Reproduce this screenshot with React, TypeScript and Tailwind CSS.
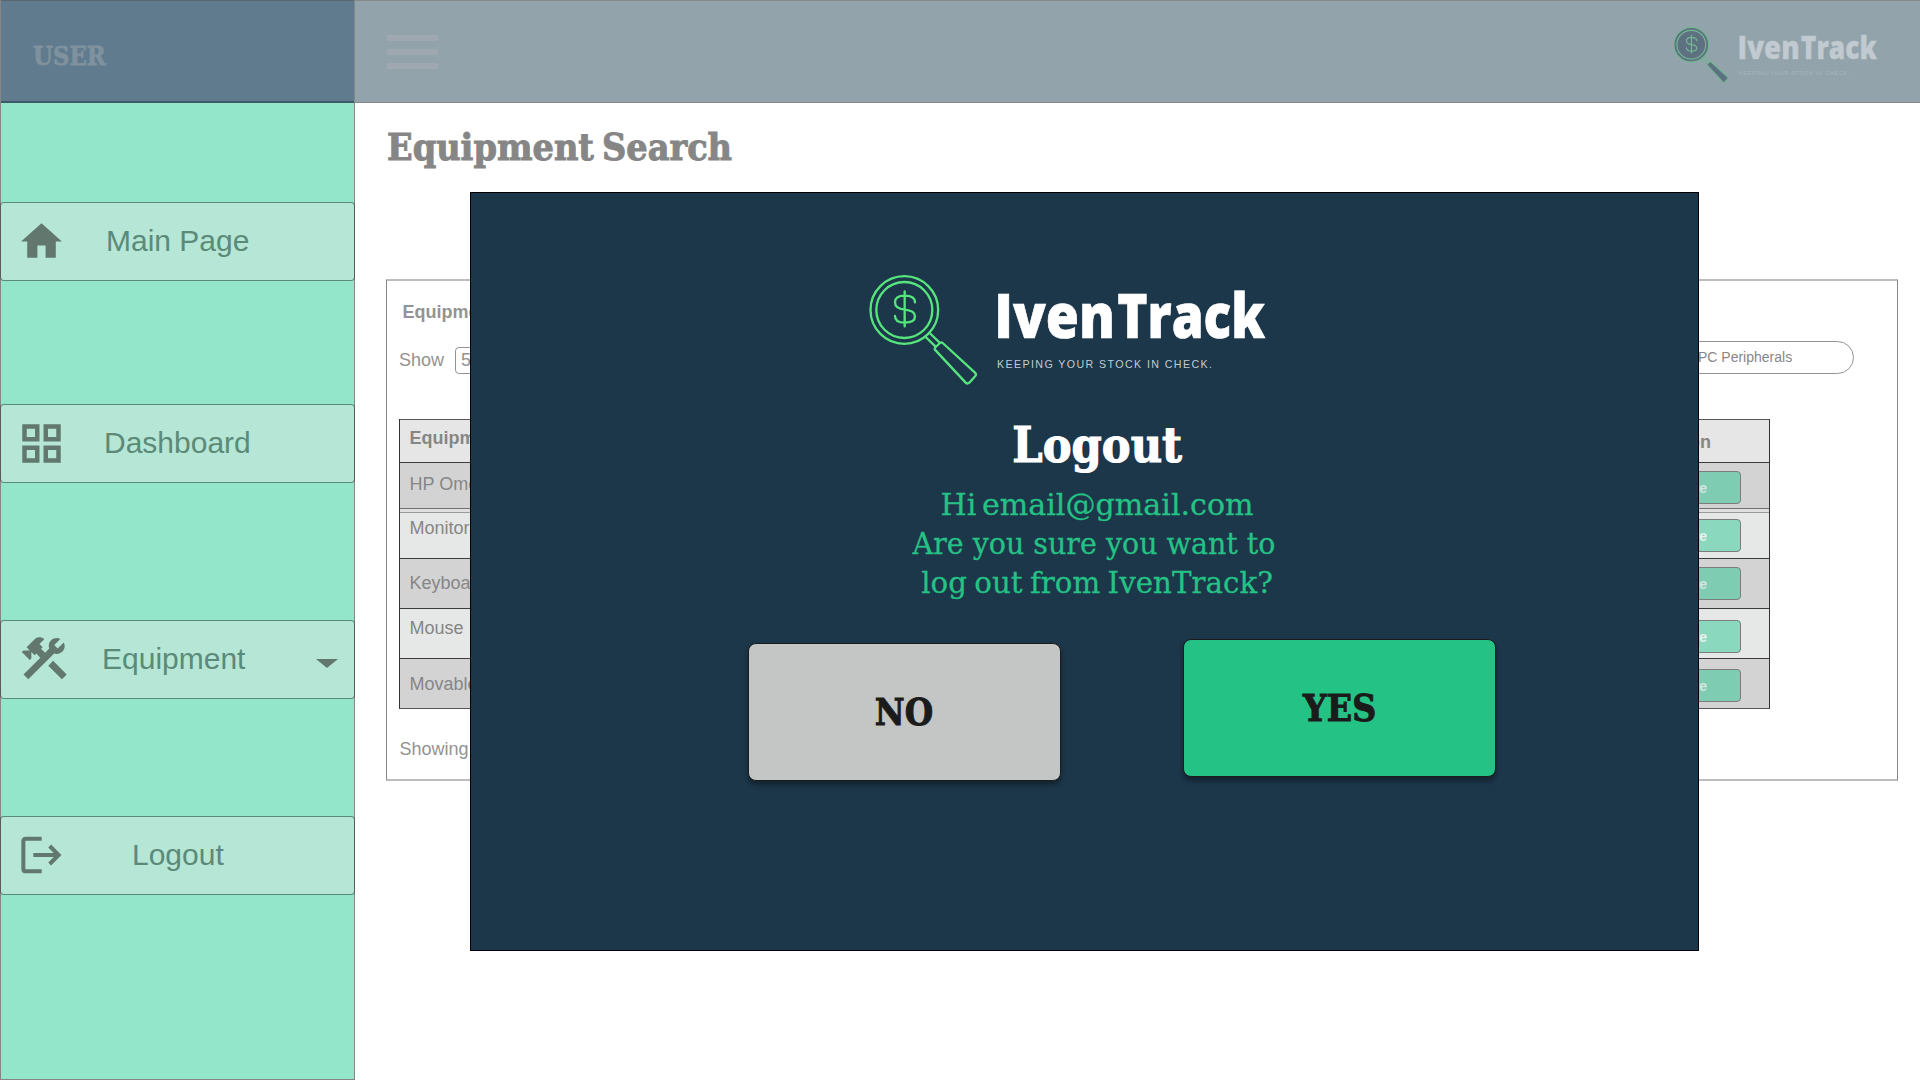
import type { ReactNode } from "react";

const icon = "#62786f";

function HomeIcon() {
  return (
    <svg viewBox="0 0 24 24" className="mt-[14px] ml-[16px] h-[49px] w-[49px]" fill={icon}>
      <path d="M10 20v-6h4v6h5v-8h3L12 3 2 12h3v8z" />
    </svg>
  );
}

function GridIcon() {
  return (
    <svg viewBox="0 0 24 24" className="mt-[13px] ml-[15px] h-[51px] w-[51px]" fill="none" stroke={icon} strokeWidth="2.1">
      <path d="M4 4h6v6H4zM14 4h6v6h-6zM4 14h6v6H4zM14 14h6v6h-6z" />
    </svg>
  );
}

function ToolsIcon() {
  return (
    <svg viewBox="0 0 24 24" className="mt-[10px] ml-[16px] h-[54.5px] w-[54.5px]" fill={icon}>
      <path d="M13.78 15.3L19.78 21.3L21.89 19.14L15.89 13.14L13.78 15.3M17.5 10.1C17.11 10.1 16.69 10.05 16.36 9.91L4.97 21.25L2.86 19.14L10.27 11.74L8.5 9.96L7.78 10.66L6.33 9.25V12.11L5.63 12.81L2.11 9.25L2.81 8.55H5.62L4.22 7.14L7.78 3.58C8.95 2.41 10.83 2.41 12 3.58L9.89 5.74L11.3 7.14L10.59 7.85L12.38 9.63L14.2 7.75C14.06 7.42 14 7 14 6.63C14 4.66 15.56 3.11 17.5 3.11C18.09 3.11 18.61 3.25 19.08 3.53L16.41 6.2L17.91 7.7L20.58 5.03C20.86 5.5 21 6 21 6.63C21 8.55 19.45 10.1 17.5 10.1Z" />
    </svg>
  );
}

function ExitIcon() {
  return (
    <svg viewBox="0 0 126 114" className="mt-[19px] ml-[19px] h-[38px] w-[42px]" fill="none" stroke={icon} strokeWidth="12">
      <path d="M65 8H18q-8 0-8 8v82q0 8 8 8h47M40 57h78M89 30l27 27-27 27" />
    </svg>
  );
}

function Logo({ muted = false }: { muted?: boolean }) {
  const line = muted ? "#74b594" : "#56e57c";
  const fill = muted ? "#5d7180" : "none";
  const text = muted ? "#c0cad0" : "#ffffff";
  return (
    <svg viewBox="0 0 1320 420" className="block h-full w-full" fontFamily="'Open Sans', sans-serif">
      <g fill={fill} stroke={line} strokeWidth="7" strokeLinejoin="round" strokeLinecap="round">
        <circle cx="163" cy="150" r="101.5" />
        <circle cx="163" cy="150" r="84" />
        <path fill="none" d="M164 94v105M195 127q0-20-31-20-29 0-29 20 0 19 29 22 31 3 31 20 0 19-31 19-29 0-29-20" />
        <path fill="none" d="M227 231l29 28M239 219l29 28" />
        <path d="M254 268q0-4 3-7l13-12q4-3 8 0l97 89q5 5 1 10l-18 20q-6 5-11 0z" />
      </g>
      <g fill={text} fontWeight="800" fontSize="184" stroke={text} strokeWidth="2">
        <text x="433" y="234" textLength="362" lengthAdjust="spacingAndGlyphs">Iven</text>
        <text x="802" y="234" textLength="443" lengthAdjust="spacingAndGlyphs">Track</text>
      </g>
      <text x="441" y="324" fontSize="32" fontFamily="'Liberation Sans', sans-serif" textLength="645" fill={muted ? "#a9b6bd" : "#c3cbd1"}>
        KEEPING YOUR STOCK IN CHECK.
      </text>
    </svg>
  );
}

function NavItem({ glyph, label, labelClass, arrow }: { glyph: ReactNode; label: string; labelClass: string; arrow?: boolean }) {
  return (
    <button className="-ml-px flex h-[79px] w-[355px] items-start rounded-[4px] border border-x-[#5a5a5a] border-y-[#5c8a79] bg-[#b5e6d6] text-left">
      <span className="block w-[91px] shrink-0">{glyph}</span>
      <span className={"mt-[20px] flex-1 text-[30px] leading-9 text-[#5c8a79] " + labelClass}>{label}</span>
      {arrow && (
        <svg viewBox="0 0 22 9" className="mt-[38px] mr-[16px] h-[9px] w-[22px]" fill={icon}>
          <path d="M0 0h22L11 9z" />
        </svg>
      )}
    </button>
  );
}

const rows = [
  { name: "HP Omen", row: "h-[46px] border-[#3c3c3c] bg-[#d3d3d3]", text: "mt-[12px]", btn: "mt-[8px] bg-[#7ecdb3] text-[#d5e6e0]" },
  { name: "Monitor", row: "h-[46px] border-[#9a9a9a] bg-[#e5e8e7]", text: "mt-[6px]", btn: "mt-[6px] bg-[#8ad9be] text-[#e8f3ef]" },
  { name: "Keyboard", row: "h-[50px] border-[#3c3c3c] bg-[#d3d3d3]", text: "mt-[15px]", btn: "mt-[8px] bg-[#7ecdb3] text-[#d5e6e0]" },
  { name: "Mouse", row: "h-[50px] border-[#3c3c3c] bg-[#e5e8e7]", text: "mt-[10px]", btn: "mt-[11px] bg-[#8ad9be] text-[#e8f3ef]" },
  { name: "Movable", row: "h-[50px] border-[#3c3c3c] bg-[#d3d3d3]", text: "mt-[16px]", btn: "mt-[10px] bg-[#7ecdb3] text-[#d5e6e0]" },
];

function EquipmentTable() {
  return (
    <div className="mt-[45px] ml-[12px] h-[290px] w-[1371px] border-x border-b border-[#333] border-b-[#555] text-[18px] leading-[18px] text-[#868686]">
      <div className="flex h-[43px] items-start justify-between border-t border-[#555] bg-[#e6e6e6] pr-[58px] pl-[9.5px] font-bold">
        <span className="mt-[9px]">Equipment</span>
        <span className="mt-[13px]">Action</span>
      </div>
      {rows.map((r, i) => (
        <div key={r.name}>
          {i === 1 && <div className="h-1 border-t border-[#707070] bg-[#e0e0e0]" />}
          <div className={"flex items-start justify-between border-t pr-[28px] pl-[9.5px] " + r.row}>
            <span className={r.text}>{r.name}</span>
            <button className={"h-[33px] w-[118px] rounded-[4px] border border-[#7c7c7c] pr-[16px] text-right text-[14px] leading-[30px] font-bold " + r.btn}>
              <span className="pr-[17px]">Remove</span>
            </button>
          </div>
        </div>
      ))}
    </div>
  );
}

function LogoutDialog() {
  return (
    <div role="dialog" className="absolute top-[192px] left-[470px] flex h-[759px] w-[1229px] flex-col border border-black bg-[#1c364a]">
      <div className="mt-[67px] ml-[379px] h-[140px] w-[440px]">
        <Logo />
      </div>
      <div className="mt-[17px] flex flex-col items-center pl-[26px] font-['DejaVu_Serif',serif] whitespace-nowrap">
        <h2 className="scale-x-[0.883] text-[49px] leading-[56px] font-bold text-white [-webkit-text-stroke:1.2px_white]">Logout</h2>
        <div className="mt-3 flex flex-col items-center text-[30px] leading-[39px] text-[#25c285] [-webkit-text-stroke:0.3px_#25c285]">
          <p className="scale-x-[1.003] [word-spacing:-4px]">Hi email@gmail.com</p>
          <p className="mr-[7px] scale-x-[0.95]">Are you sure you want to</p>
          <p className="scale-x-[0.977] [word-spacing:-2px]">log out from IvenTrack?</p>
        </div>
      </div>
      <div className="mt-[37px] ml-[277px] flex gap-[122px] font-['DejaVu_Serif',serif] text-[37px] font-bold text-[#1b1b1b]">
        <button className="mt-[4px] flex h-[138px] w-[313px] items-center justify-center rounded-[8px] border border-[#1b1b1b] bg-[#c4c6c5] pt-px shadow-[0_4px_5px_rgba(0,0,0,0.35)]">
          <span className="scale-x-[0.883] [-webkit-text-stroke:1px_#1b1b1b]">NO</span>
        </button>
        <button className="flex h-[138px] w-[313px] items-center justify-center rounded-[8px] border border-[#1b1b1b] bg-[#25c285] pt-px pl-px shadow-[0_4px_5px_rgba(0,0,0,0.35)]">
          <span className="scale-x-[0.9] [-webkit-text-stroke:1px_#1b1b1b]">YES</span>
        </button>
      </div>
    </div>
  );
}

export default function App() {
  return (
    <div className="relative flex h-[1080px] w-[1920px] overflow-hidden bg-white font-['Liberation_Sans',Arial,sans-serif]">
      <aside className="flex w-[355px] shrink-0 flex-col border-x border-b border-[#868686] bg-[#94e6ca]">
        <div className="h-[103px] border-t border-b-2 border-t-[#566772] border-b-[#3d5a68] bg-[#607b8e] pt-[40px] pl-[32px]">
          <div className="w-fit origin-left scale-x-[0.878] font-['DejaVu_Serif',serif] text-[26px] leading-[30px] font-bold text-[#7f929e] [-webkit-text-stroke:0.8px_#7f929e]">
            USER
          </div>
        </div>
        <nav className="flex flex-col pt-[99px]">
          <NavItem glyph={<HomeIcon />} label="Main Page" labelClass="pl-[14px]" />
          <div className="h-[123px]" />
          <NavItem glyph={<GridIcon />} label="Dashboard" labelClass="pl-[12px]" />
          <div className="h-[137px]" />
          <NavItem glyph={<ToolsIcon />} label="Equipment" labelClass="pl-[10px]" arrow />
          <div className="h-[117px]" />
          <NavItem glyph={<ExitIcon />} label="Logout" labelClass="pl-[40px]" />
        </nav>
      </aside>
      <main className="flex flex-1 flex-col">
        <header className="flex h-[103px] items-start justify-between border-y border-[#87888b] bg-[#93a3ab] pr-[30px] pl-[32px]">
          <div className="mt-[34px] flex flex-col gap-[8px]">
            <div className="h-[6px] w-[51px] bg-[#9fa8b1]" />
            <div className="h-[6px] w-[51px] bg-[#9fa8b1]" />
            <div className="h-[6px] w-[51px] bg-[#9fa8b1]" />
          </div>
          <div className="mt-[18px] h-[72px] w-[227px]">
            <Logo muted />
          </div>
        </header>
        <h1 className="mt-[24px] ml-[32px] w-fit origin-left scale-x-[0.909] font-['DejaVu_Serif',serif] text-[37px] leading-[40px] font-bold text-[#868686] [-webkit-text-stroke:1px_#868686] [word-spacing:-4px]">
          Equipment Search
        </h1>
        <section className="mt-[112px] ml-[31px] h-[502px] w-[1512px] border-x border-y-2 border-x-[#868686] border-y-[#bdbdbd] text-[18px] leading-[18px] text-[#939393]">
          <h3 className="mt-[22px] ml-[15.5px] font-bold">Equipment List</h3>
          <div className="mt-[20px] flex items-start justify-between pr-[43px] pl-[12px]">
            <div className="flex items-start pt-[6px]">
              <span className="mt-[4px] w-[56px]">Show</span>
              <span className="h-[27px] w-[60px] rounded-[4px] border border-[#939393] pt-[3px] pl-[5px]">5</span>
            </div>
            <div className="h-[33px] w-[240px] rounded-full border border-[#939393] pl-[83px] text-[14px] leading-[31px] text-[#868686]">PC Peripherals</div>
          </div>
          <EquipmentTable />
          <p className="mt-[31px] ml-[12.5px]">Showing 1 to 5</p>
        </section>
      </main>
      <LogoutDialog />
    </div>
  );
}
